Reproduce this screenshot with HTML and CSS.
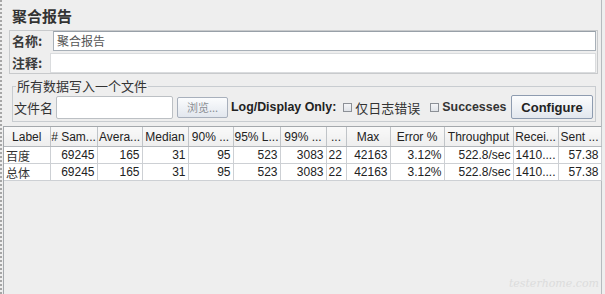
FILE: index.html
```html
<!DOCTYPE html>
<html lang="zh">
<head>
<meta charset="utf-8">
<link rel="stylesheet" href="styles.css">
</head>
<body>
<div class="frame">
  <div class="title">聚合报告</div>
  <div class="name-panel">
    <div class="row row-name">
      <span class="lbl lbl-name">名称:</span>
      <div class="field field-name">聚合报告</div>
    </div>
    <div class="row row-comment">
      <span class="lbl lbl-comment">注释:</span>
      <div class="field field-comment"></div>
    </div>
  </div>
  <fieldset class="file-group">
    <legend>所有数据写入一个文件</legend>
    <div class="file-row">
      <span class="lbl-file">文件名</span>
      <div class="file-input"></div>
      <span class="btn btn-browse">浏览...</span>
      <span class="bold log-label">Log/Display Only:</span>
      <span class="cb"></span><span class="cb-text cjk">仅日志错误</span>
      <span class="cb cb2"></span><span class="cb-text bold succ">Successes</span>
      <span class="btn btn-config">Configure</span>
    </div>
  </fieldset>
  <div class="scroll">
    <table class="grid">
      <colgroup>
        <col class="c46"><col class="c47"><col class="c45"><col class="c46"><col class="c45"><col class="c47"><col class="c46"><col class="c20"><col class="c44"><col class="c54"><col class="c69"><col class="c45"><col class="c43">
      </colgroup>
      <thead>
        <tr>
          <th>Label</th><th># Sam...</th><th>Avera...</th><th>Median</th><th>90% ...</th><th>95% L...</th><th>99% ...</th><th>...</th><th>Max</th><th>Error %</th><th>Throughput</th><th>Recei...</th><th>Sent ...</th>
        </tr>
      </thead>
      <tbody>
        <tr>
          <td class="lab">百度</td><td>69245</td><td>165</td><td>31</td><td>95</td><td>523</td><td>3083</td><td class="l">22</td><td>42163</td><td>3.12%</td><td>522.8/sec</td><td class="l">1410....</td><td>57.38</td>
        </tr>
        <tr>
          <td class="lab">总体</td><td>69245</td><td>165</td><td>31</td><td>95</td><td>523</td><td>3083</td><td class="l">22</td><td>42163</td><td>3.12%</td><td>522.8/sec</td><td class="l">1410....</td><td>57.38</td>
        </tr>
      </tbody>
    </table>
  </div>
  <span class="watermark">testerhome.com</span>
</div>
</body>
</html>
```

FILE: styles.css
```css
html, body {
  margin: 0;
  padding: 0;
  background: #eeeeee;
}
body {
  width: 605px;
  height: 294px;
  overflow: hidden;
  font-family: "Liberation Sans", "Noto Sans CJK SC", sans-serif;
  color: #222;
}
.cjk, .title, .lbl, .field, legend, .lbl-file, .btn-browse, .lab {
  font-family: "Noto Sans CJK SC", "Liberation Sans", sans-serif;
}
.frame {
  position: relative;
  box-sizing: border-box;
  width: 602px;
  height: 294px;
  border-left: 2px dotted #a6a6a6;
  border-right: 1px solid #b6babe;
  display: flex;
  flex-direction: column;
}
.title {
  padding: 6px 0 0 10px;
  font-size: 15px;
  line-height: 20px;
  font-weight: bold;
  color: #333;
  height: 21px;
}
.name-panel {
  margin: 3px 0 0 7px;
  width: 586px;
  height: 42px;
  border: 1px solid #c8cacc;
  padding-right: 1px;
}
.row {
  display: flex;
  align-items: center;
  height: 20px;
}
.row-comment {
  margin-top: 2px;
}
.lbl {
  font-size: 13px;
  font-weight: bold;
  color: #3a3a3a;
  padding-left: 2px;
  box-sizing: border-box;
  line-height: 20px;
  white-space: nowrap;
  flex-shrink: 0;
}
.lbl-name { width: 43px; }
.lbl-comment { width: 40px; }
.field {
  flex: 1;
  box-sizing: border-box;
  height: 20px;
  background: #fff;
  font-size: 12px;
  line-height: 18px;
  color: #555;
  padding-left: 3px;
}
.field-name {
  border: 1px solid #a8b0b8;
  border-top-color: #98a0a8;
}
.field-comment {
  border: 1px solid #dadcde;
}
.file-group {
  margin: 4px 0 0 10px;
  width: 584px;
  box-sizing: border-box;
  border: 1px solid #c8ccd0;
  padding: 0 0 1px 1px;
}
.file-group legend {
  font-size: 13px;
  line-height: 16px;
  padding: 0 1px;
  margin-left: 2px;
  color: #333;
}
.file-row {
  display: flex;
  align-items: center;
  height: 26px;
  font-size: 13px;
  white-space: nowrap;
}
.file-row > * {
  flex-shrink: 0;
}
.lbl-file {
  width: 42px;
  color: #333;
}
.file-input {
  width: 117px;
  height: 23px;
  box-sizing: border-box;
  background: #fff;
  border: 1px solid #bcc0c4;
  border-radius: 2px;
}
.btn {
  box-sizing: border-box;
  display: flex;
  align-items: center;
  justify-content: center;
  border: 1px solid #a8b0bc;
  border-radius: 2px;
  background: linear-gradient(#fbfcfd, #e2e7ee);
}
.btn-browse {
  margin-left: 4px;
  width: 51px;
  height: 21px;
  font-size: 11px;
  color: #8a8e94;
}
.bold {
  font-weight: bold;
  color: #222;
}
.log-label {
  margin-left: 3px;
  font-size: 12.4px;
}
.succ {
  font-size: 12.4px;
}
.cb {
  width: 9px;
  height: 9px;
  box-sizing: border-box;
  border: 1px solid #8c9096;
  background: linear-gradient(#f4f5f7, #e0e3e8);
  margin-left: 7px;
}
.cb2 {
  margin-left: 10px;
}
.cb-text {
  margin-left: 3px;
  color: #333;
}
.btn-config {
  margin-left: auto;
  margin-right: 2px;
  width: 82px;
  height: 24px;
  font-weight: bold;
  font-size: 13px;
  color: #222;
  border-color: #8e9cb0;
}
.scroll {
  flex: 1;
  margin: 4px 0 0 1px;
  border-left: 1px solid #a4a8ac;
  border-top: 1px solid #a4a8ac;
}
.grid {
  border-collapse: collapse;
  table-layout: fixed;
  width: 597px;
  font-size: 12px;
}
.c46 { width: 46px; }
.c47 { width: 47px; }
.c45 { width: 45px; }
.c44 { width: 44px; }
.c43 { width: 43px; }
.c20 { width: 20px; }
.c54 { width: 54px; }
.c69 { width: 69px; }
.grid th {
  height: 19px;
  padding: 0;
  font-weight: normal;
  color: #222;
  text-align: center;
  white-space: nowrap;
  overflow: hidden;
  background: linear-gradient(#f9f9f9, #eeeeee);
  border-right: 1px solid #c0c4c8;
  border-bottom: 1px solid #b4b8bc;
}
.grid td {
  height: 16px;
  padding: 0 2px 0 0;
  text-align: right;
  white-space: nowrap;
  overflow: hidden;
  background: #fff;
  color: #222;
  border-right: 1px solid #cdd0d4;
  border-bottom: 1px solid #cdd0d4;
  line-height: 15px;
}
.grid td.lab {
  text-align: left;
  padding-left: 2px;
  color: #333;
}
.grid td.l {
  text-align: left;
  padding-left: 2px;
}
.watermark {
  position: absolute;
  right: 2px;
  bottom: 4px;
  font-family: "DejaVu Serif", serif;
  font-style: italic;
  font-size: 11px;
  color: #dcdcdc;
}
```
